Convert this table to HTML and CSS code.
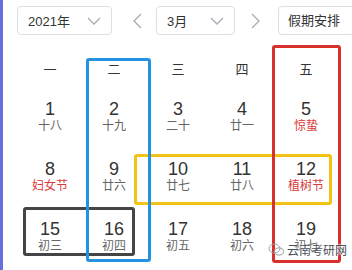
FILE: index.html
```html
<!DOCTYPE html>
<html lang="zh-CN">
<head>
  <meta charset="UTF-8">
  <meta name="viewport" content="width=device-width, initial-scale=1.0">
  <title>万年历</title>
  <link rel="stylesheet" href="styles.css">
</head>
<body>
  <div class="page">
    <div class="toolbar">
      <div class="select year">
        <span>2021年</span>
        <svg class="caret" width="14" height="8" viewBox="0 0 14 8"><polyline points="1,1 7,7 13,1" /></svg>
      </div>
      <svg class="nav prev" width="9" height="16" viewBox="0 0 9 16"><polyline points="8,1 1,8 8,15" /></svg>
      <div class="select month">
        <span>3月</span>
        <svg class="caret" width="14" height="8" viewBox="0 0 14 8"><polyline points="1,1 7,7 13,1" /></svg>
      </div>
      <svg class="nav next" width="9" height="16" viewBox="0 0 9 16"><polyline points="1,1 8,8 1,15" /></svg>
      <div class="holiday">假期安排</div>
    </div>

    <div class="calendar">
      <div class="weekday">一</div>
      <div class="weekday">二</div>
      <div class="weekday">三</div>
      <div class="weekday">四</div>
      <div class="weekday">五</div>

      <div class="day"><div class="num">1</div><div class="lunar">十八</div></div>
      <div class="day"><div class="num">2</div><div class="lunar">十九</div></div>
      <div class="day"><div class="num">3</div><div class="lunar">二十</div></div>
      <div class="day"><div class="num">4</div><div class="lunar">廿一</div></div>
      <div class="day"><div class="num">5</div><div class="lunar festival">惊蛰</div></div>

      <div class="day"><div class="num">8</div><div class="lunar festival">妇女节</div></div>
      <div class="day"><div class="num">9</div><div class="lunar">廿六</div></div>
      <div class="day"><div class="num">10</div><div class="lunar">廿七</div></div>
      <div class="day"><div class="num">11</div><div class="lunar">廿八</div></div>
      <div class="day"><div class="num">12</div><div class="lunar festival">植树节</div></div>

      <div class="day"><div class="num">15</div><div class="lunar">初三</div></div>
      <div class="day"><div class="num">16</div><div class="lunar">初四</div></div>
      <div class="day"><div class="num">17</div><div class="lunar">初五</div></div>
      <div class="day"><div class="num">18</div><div class="lunar">初六</div></div>
      <div class="day"><div class="num">19</div><div class="lunar">初七</div></div>
    </div>

    <!-- hand-drawn highlight frames -->
    <div class="frame frame-yellow"></div>
    <div class="frame frame-dark"></div>
    <div class="frame frame-blue"></div>
    <div class="frame frame-red"></div>

    <div class="watermark">
      <svg width="17" height="14" viewBox="0 0 17 14">
        <ellipse cx="6.5" cy="5.5" rx="5.5" ry="4.5" />
        <ellipse cx="11" cy="8.5" rx="4.5" ry="3.6" />
      </svg>
      <span>云南考研网</span>
    </div>
  </div>
</body>
</html>
```

FILE: styles.css
```css
body {
  margin: 0;
  background: #fff;
  font-family: "Liberation Sans", "Noto Sans CJK SC", sans-serif;
  color: #333;
}

.page {
  position: relative;
  height: 270px;
  overflow: hidden;
  border-left: 3px solid #6470dc;
}

.toolbar {
  display: flex;
  align-items: center;
  padding: 6px 0 0 14px;
  height: 29px;
  font-size: 13px;
  white-space: nowrap;
}

.select {
  box-sizing: border-box;
  height: 29px;
  display: flex;
  align-items: center;
  justify-content: space-between;
  padding: 0 10px;
  border: 1px solid #dcdfe6;
  border-radius: 4px;
  flex-shrink: 0;
}

.year {
  width: 95px;
}

.month {
  width: 79px;
  margin-left: 14px;
}

.caret polyline,
.nav polyline {
  fill: none;
  stroke: #a8abb2;
  stroke-width: 1.3;
}

.nav {
  flex-shrink: 0;
}

.prev {
  margin-left: 21px;
}

.next {
  margin-left: 16px;
}

.holiday {
  box-sizing: border-box;
  height: 29px;
  line-height: 27px;
  margin-left: 18px;
  padding: 0 14px 0 9px;
  border: 1px solid #dcdfe6;
  border-radius: 4px;
  flex-shrink: 0;
}

.calendar {
  display: grid;
  grid-template-columns: repeat(5, 64px);
  grid-template-rows: 40px repeat(3, 60px);
  margin: 15px 0 0 15px;
  text-align: center;
}

.weekday {
  font-size: 13px;
  line-height: 40px;
}

.day {
  padding-top: 9px;
}

.num {
  font-size: 18px;
  line-height: 20px;
}

.lunar {
  font-size: 12px;
  line-height: 16px;
  color: #666;
  margin-top: -1px;
}

.festival {
  color: #d93a3a;
}

.frame {
  position: absolute;
  box-sizing: border-box;
  border: 3px solid;
  border-radius: 3px;
}

.frame-blue {
  left: 83px;
  top: 58px;
  width: 65px;
  height: 204px;
  border-color: #2293e3;
}

.frame-red {
  left: 269px;
  top: 45px;
  width: 69px;
  height: 218px;
  border-color: #d8302b;
}

.frame-yellow {
  left: 131px;
  top: 154px;
  width: 198px;
  height: 51px;
  border-color: #f3c313;
}

.frame-dark {
  left: 20px;
  top: 207px;
  width: 112px;
  height: 49px;
  border-color: #454545;
}

.watermark {
  position: absolute;
  left: 265px;
  top: 241px;
  display: flex;
  align-items: center;
  gap: 2px;
  font-family: "Noto Sans CJK SC", sans-serif;
  font-size: 12px;
  color: #4a4f5a;
  text-shadow: 0 0 2px #fff, 0 0 2px #fff, 0 0 1px #fff;
}

.watermark ellipse {
  fill: none;
  stroke: #9aa0a8;
  stroke-width: 1;
}
```
